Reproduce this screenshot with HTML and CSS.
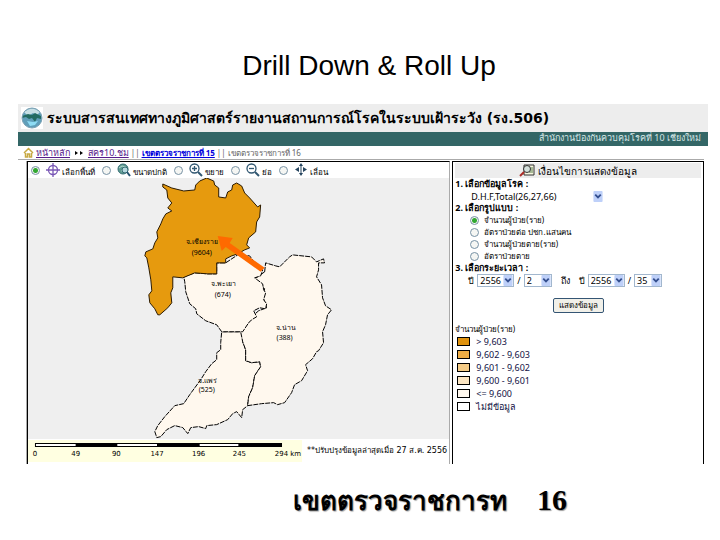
FILE: index.html
```
<!DOCTYPE html>
<html lang="th">
<head>
<meta charset="utf-8">
<title>Drill Down &amp; Roll Up</title>
<link rel="stylesheet" href="styles.css">
</head>
<body>
<main class="slide">
  <h1 class="slide-title">Drill Down &amp; Roll Up</h1>
  <section class="app">
    <header class="app-head">
      <svg class="globe" viewBox="0 0 22 22" aria-hidden="true"><rect width="22" height="22" fill="#fff"/><circle cx="11" cy="11" r="10" fill="#5f9eb9"/><path d="M3 5Q11-2 19 5L16 8 12 6 7 9Z" fill="#c7dfe4"/><path d="M1 9l6-2 4 1 3-2 6 3v3l-4-1-2 4-3-4-3 1-3-2-4 1z" fill="#236b61"/><path d="M6 14l6 1 5-1-3 4-5 1z" fill="#8edcf4"/><circle cx="11" cy="11" r="10" fill="none" stroke="#7fa3b5"/></svg>
      <h2 class="app-title">ระบบสารสนเทศทางภูมิศาสตร์รายงานสถานการณ์โรคในระบบเฝ้าระวัง (รง.506)</h2>
    </header>
    <div class="office">สำนักงานป้องกันควบคุมโรคที่ 10 เชียงใหม่</div>
    <nav class="crumbs">
      <svg class="home" viewBox="0 0 11 11" aria-hidden="true"><path d="M1 6l4.500-4.500L10 6M2.500 6v4h2V7h2v3h2V6" fill="none" stroke="#c7a943" stroke-width="1.500"/></svg>
      <a class="visited" href="#">หน้าหลัก</a>
      <svg class="arrows" viewBox="0 0 10 8" aria-hidden="true"><path d="M1 2l3 2-3 2zM6 2l3 2-3 2z"/></svg>
      <a class="visited" href="#">สคร10.ชม</a>
      <span>||</span>
      <a class="current" href="#">เขตตรวจราชการที่ 15</a>
      <span>||</span>
      <span>เขตตรวจราชการที่ 16</span>
    </nav>
    <div class="panels">
      <section class="map-panel">
        <div class="tools">
          <label class="tool"><input type="radio" name="tool" checked><svg viewBox="0 0 14 14"><g fill="none" stroke="#7957b5" stroke-width="1.300"><circle cx="7" cy="7" r="4.500"/><path d="M7 0v14M0 7h14"/></g></svg><span>เลือกพื้นที่</span></label>
          <label class="tool"><input type="radio" name="tool"><svg viewBox="0 0 14 14"><circle cx="6" cy="6" r="5" fill="#5e9b91" stroke="#356c73"/><path d="M2 5l3-2 4 1M4 8l4-2" stroke="#b4dad0" fill="none"/><circle cx="8" cy="7" r="3" fill="#b6d8df" stroke="#356c73"/><path d="M10 9l3 4" stroke="#26526e" stroke-width="2"/></svg><span>ขนาดปกติ</span></label>
          <label class="tool"><input type="radio" name="tool"><svg viewBox="0 0 14 14"><g fill="none" stroke="#315771" stroke-width="1.300"><circle cx="5.500" cy="5.500" r="4.500"/><path d="M3 5.500h5M5.500 3v5"/><path d="M9 9l4 4" stroke-width="2"/></g></svg><span>ขยาย</span></label>
          <label class="tool"><input type="radio" name="tool"><svg viewBox="0 0 14 14"><g fill="none" stroke="#315771" stroke-width="1.300"><circle cx="5.500" cy="5.500" r="4.500"/><path d="M3 5.500h5"/><path d="M9 9l4 4" stroke-width="2"/></g></svg><span>ย่อ</span></label>
          <label class="tool"><input type="radio" name="tool"><svg viewBox="0 0 14 14"><path d="M7 0l2 3H7.500v7H9l-2 3-2-3h1.500V3H5zM5 4v5L1 6.500zM9 4v5l4-2.500z" fill="#26455f"/></svg><span>เลื่อน</span></label>
        </div>
        <svg class="map" viewBox="28 178 422 261" role="img" aria-label="แผนที่">
          <g class="province">
            <path d="M222 332L243 332 243 342 246 350 246 361 252 363 260 362 261 367 255 376 253 388 249 397 248 406 243 410 242 418 237 412 233 414 228 420 217 425 207 426 206 429 199 427 191 428 188 434 183 428 175 426 167 430 161 437 157 438 155 432 158 426 165 417 175 406 184 404 190 395 201 380 206 372 212 364 217 360 217 353 221 350 221 343Z"/>
            <path d="M265 272L266 263 276 266 280 267 290 257 293 255 312 257 317 262 324 259 325 263 319 263 319 270 317 277 322 285 323 298 326 306 332 310 328 315 326 325 323 332 324 343 319 351 317 352 313 359 306 365 308 371 302 381 295 385 292 393 285 403 278 405 274 403 262 404 248 406 249 397 253 388 255 376 261 367 260 362 252 363 246 361 246 350 243 342 241 332 249 323 252 317 259 311 267 308 263 296 265 289 255 279Z"/>
            <path d="M184 277L195 273 208 274 217 274 217 263 226 263 238 255 250 256 255 263 263 270 261 276 255 278 263 284 264 290 266 293 264 300 267 304 266 309 260 308 254 311 257 317 252 320 249 323 243 332 222 332 217 325 206 321 197 314 196 309 190 304 186 292 185 282Z"/>
          </g>
          <path class="selected" d="M163 184L172 188 184 191 195 190 196 185 200 181 207 178 214 181 215 185 219 188 219 197 226 198 228 192 232 190 233 185 237 183 242 186 245 193 250 198 258 207 261 205 260 217 257 222 256 232 249 238 247 245 250 248 245 250 238 254 232 256 226 259 226 263 217 263 217 274 208 274 195 273 183 278 173 277 173 288 171 293 172 303 168 308 160 315 158 315 155 309 150 303 149 295 152 291 151 280 149 268 147 258 145 256 146 252 153 249 155 243 158 238 157 232 161 224 163 219 166 214 172 211 168 208 172 203 168 198 167 190 163 187Z"/>
          <path class="pointer" d="M218 236l15 2-3 5 35 25-4 4-35-25-4 4z"/>
          <g class="place">
            <text x="202" y="244">จ.เชียงราย</text><text x="202" y="255">(9604)</text>
            <text x="224" y="286">จ.พะเยา</text><text x="223" y="297">(674)</text>
            <text x="286" y="330">จ.น่าน</text><text x="285" y="340">(388)</text>
            <text x="208" y="383">จ.แพร่</text><text x="207" y="392">(525)</text>
          </g>
        </svg>
        <footer class="map-foot">
          <svg class="scale" viewBox="0 0 276 22" role="img" aria-label="294 km">
            <path d="M7 3h249v4H7z"/><path class="gap" d="M8 4h40v2H8zM90 4h40v2H90zM173 4h39v2h-39z"/>
            <g><text x="7" y="16">0</text><text x="48" y="16">49</text><text x="89" y="16">90</text><text x="130" y="16">147</text><text x="172" y="16">196</text><text x="213" y="16">245</text><text x="262" y="16">294 km</text></g>
          </svg>
          <span class="updated">**ปรับปรุงข้อมูลล่าสุดเมื่อ 27 ส.ค. 2556</span>
        </footer>
      </section>
      <form class="filters">
        <h3 class="filter-title"><svg viewBox="0 0 16 13" aria-hidden="true"><path d="M5 1h10v10H5z" fill="#f6f6df" stroke="#333"/><path d="M10 4h4M10 6h4M10 8h4" stroke="#567c4a"/><circle cx="8" cy="5" r="3.500" fill="#d5e1dc" stroke="#333"/><path d="M5 8l-4 4" stroke="#ab2b27" stroke-width="2"/></svg><span>เงื่อนไขการแสดงข้อมูล</span></h3>
        <label class="step" for="disease">1. เลือกข้อมูลโรค :</label>
        <div class="pick disease"><select id="disease"><option>D.H.F,Total(26,27,66)</option></select><svg viewBox="0 0 10 12"><rect width="10" height="12" rx="1"/><path d="M2 4l3 3 3-3"/></svg></div>
        <fieldset class="kinds">
          <legend class="step">2. เลือกรูปแบบ :</legend>
          <label><input type="radio" name="kind" checked>จำนวนผู้ป่วย(ราย)</label>
          <label><input type="radio" name="kind">อัตราป่วยต่อ ปชก.แสนคน</label>
          <label><input type="radio" name="kind">จำนวนผู้ป่วยตาย(ราย)</label>
          <label><input type="radio" name="kind">อัตราป่วยตาย</label>
        </fieldset>
        <div class="step">3. เลือกระยะเวลา :</div>
        <div class="period">
          <label for="y1">ปี</label>
          <div class="pick year"><select id="y1"><option>2556</option></select><svg viewBox="0 0 10 12"><rect width="10" height="12" rx="1"/><path d="M2 4l3 3 3-3"/></svg></div>
          <span>/</span>
          <div class="pick week"><select aria-label="สัปดาห์เริ่มต้น"><option>2</option></select><svg viewBox="0 0 10 12"><rect width="10" height="12" rx="1"/><path d="M2 4l3 3 3-3"/></svg></div>
          <span class="until">ถึง</span>
          <label for="y2">ปี</label>
          <div class="pick year"><select id="y2"><option>2556</option></select><svg viewBox="0 0 10 12"><rect width="10" height="12" rx="1"/><path d="M2 4l3 3 3-3"/></svg></div>
          <span>/</span>
          <div class="pick week"><select aria-label="สัปดาห์สิ้นสุด"><option>35</option></select><svg viewBox="0 0 10 12"><rect width="10" height="12" rx="1"/><path d="M2 4l3 3 3-3"/></svg></div>
        </div>
        <button class="show" type="button">แสดงข้อมูล</button>
        <div class="legend-title">จำนวนผู้ป่วย(ราย)</div>
        <ul class="legend">
          <li><i class="c1"></i>&gt; 9,603</li>
          <li><i class="c2"></i>9,602 - 9,603</li>
          <li><i class="c3"></i>9,601 - 9,602</li>
          <li><i class="c4"></i>9,600 - 9,601</li>
          <li><i class="c5"></i>&lt;= 9,600</li>
          <li><i class="c6"></i>ไม่มีข้อมูล</li>
        </ul>
      </form>
    </div>
  </section>
  <p class="caption"><span>เขตตรวจราชการท</span><span class="number">16</span></p>
</main>
</body>
</html>
```
FILE: styles.css
```
* { box-sizing: border-box; }
body { margin: 0; background: #fff; color: #000; font: 9px/12px "Noto Sans", "DejaVu Sans", sans-serif; }
h1, h2, h3, p, ul, fieldset, legend { margin: 0; padding: 0; border: 0; }
.slide { padding: 50px 12px 0 18px; }
.slide-title { font: 28px/32px "Liberation Sans", sans-serif; text-align: center; padding-left: 12px; margin-bottom: 22px; }
.app-head { display: flex; align-items: center; gap: 4px; height: 28px; padding-left: 3px; background: #ededed; }
.globe { width: 22px; height: 22px; flex: none; }
.app-title { font: bold 14px/24px "DejaVu Sans", sans-serif; white-space: nowrap; }
.office { height: 14px; padding-right: 7px; background: #336666; color: #d3e5e5; text-align: right; }
.crumbs { display: flex; align-items: center; gap: 2px; height: 14px; padding-left: 5px; color: #666; white-space: nowrap; border-bottom: 1px solid #aaa; margin-right: 4px; }
.crumbs span { font-size: 8px; }
.home { width: 11px; height: 11px; }
.arrows { width: 10px; height: 8px; margin: 0 2px; }
.visited { color: #551a8b; }
.current { color: #0000dd; font-size: 8px; font-weight: bold; }
.panels { display: grid; grid-template-columns: 424fr 252fr; gap: 2px; margin: 1px 4px 0 8px; border-left: 1px solid #aaa; }
.map-panel { border: solid #000; border-width: 1px 0 0 1px; border-right: 1px solid #aaa; min-width: 0; }
.tools { display: flex; height: 16px; padding-left: 3px; gap: 7px; }
.tool { display: flex; align-items: center; gap: 2px; font-size: 8px; white-space: nowrap; }
.tool svg { width: 14px; height: 14px; margin-left: 4px; }
.tool span { padding-top: 4px; }
input[type="radio"] { appearance: none; width: 9px; height: 9px; margin: 0; flex: none; border: 1px solid #7892a5; border-radius: 50%; background: #f5f6f3; }
input[type="radio"]:checked { background: radial-gradient(circle, #32a832 0 2px, #f5f6f3 3px); }
.map { display: block; width: 100%; background: #efefef; }
.province path { fill: #fff8ee; stroke: #000; stroke-dasharray: 5 1; }
.map .selected { fill: #e69a0e; stroke: #2b1a00; }
.pointer { fill: #ff6a00; }
.place text { font-size: 7px; text-anchor: middle; }
.map-foot { display: flex; align-items: center; gap: 5px; height: 25px; font-family: "DejaVu Sans", sans-serif; }
.scale { width: 65%; background: #ffffe1; }
.scale text { font-size: 7px; text-anchor: middle; }
.scale .gap { fill: #fff; }
.updated { font-size: 8px; white-space: nowrap; }
.filters { border: 1px solid #000; border-bottom: 0; padding: 1px 2px 0; min-width: 0; white-space: nowrap; }
.filter-title { display: flex; justify-content: center; align-items: center; gap: 3px; height: 15px; background: #ededed; font-size: 10px; font-weight: normal; }
.filter-title svg { width: 16px; height: 13px; }
.step { display: block; font-size: 9px; font-weight: bold; line-height: 12px; }
.pick { position: relative; height: 13px; border: 1px solid #a2b7ce; }
.pick select { appearance: none; display: block; width: 100%; height: 100%; padding: 0 0 0 2px; margin: 0; border: 0; background: transparent; color: #000; font: 9px/11px "Noto Sans", sans-serif; }
.pick svg { position: absolute; right: 0; top: 0; width: 10px; height: 11px; pointer-events: none; }
.pick rect { fill: #bed0f9; }
.pick path { fill: none; stroke: #334e8e; stroke-width: 2; }
.disease { width: 136px; height: 12px; margin-left: 13px; border-color: transparent; }
.kinds label { display: flex; align-items: center; gap: 5px; height: 12px; padding-left: 15px; font-size: 8px; }
.period { display: flex; align-items: center; gap: 3px; padding-left: 13px; }
.year { width: 37px; }
.week { width: 28px; }
.until { padding: 0 6px; }
.show { display: block; width: 51px; height: 15px; margin: 11px 0 0 98px; padding: 0; border: 1px solid #345574; border-radius: 2px; background: #f1f0e9; color: #000; font: 8px/12px "DejaVu Sans", sans-serif; }
.legend-title { margin-top: 10px; font-size: 8px; }
.legend { list-style: none; padding: 0 0 0 2px; color: #111144; }
.legend li { display: flex; align-items: center; gap: 6px; height: 13px; }
.legend i { width: 13px; height: 9px; border: 1px solid #000; }
.c1 { background: #e0930f; }
.c2 { background: #efad45; }
.c3 { background: #f4cb86; }
.c4 { background: #fce6c3; }
.c5 { background: #fff8ee; }
.c6 { background: #fff; }
.caption { display: flex; align-items: baseline; gap: 30px; margin: 18px 0 0 275px; font: bold 26px/36px "DejaVu Sans", sans-serif; text-shadow: 1px 1px 1px #999; white-space: nowrap; }
.number { font-family: "Liberation Serif", serif; font-size: 30px; }
```
